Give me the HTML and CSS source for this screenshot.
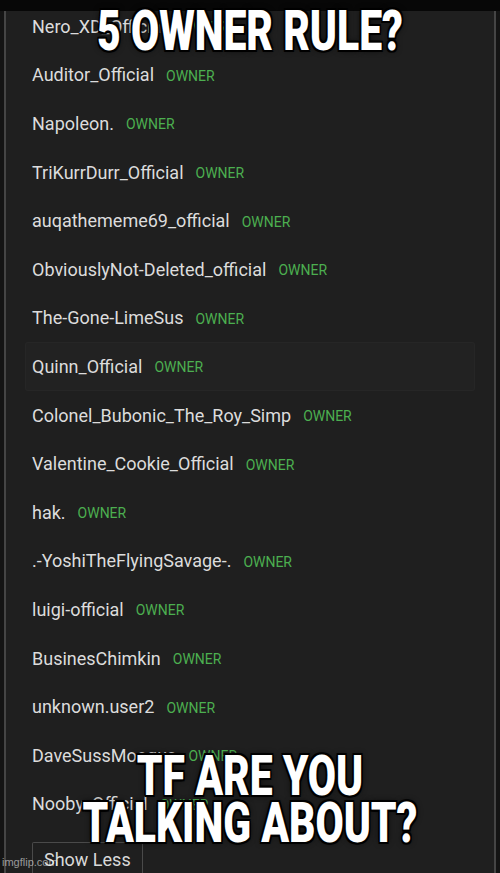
FILE: index.html
```html
<!DOCTYPE html>
<html lang="en">
<head>
    <meta charset="UTF-8">
    <meta name="viewport" content="width=device-width, initial-scale=1.0">
    <title>5 Owner Rule?</title>
    <link rel="stylesheet" href="styles.css">
</head>
<body>
    <div class="top-bar"></div>

    <div class="panel">
        <ul class="members">
            <li class="member"><span class="name">Nero_XD_Official</span><span class="tag">OWNER</span></li>
            <li class="member"><span class="name">Auditor_Official</span><span class="tag">OWNER</span></li>
            <li class="member"><span class="name">Napoleon.</span><span class="tag">OWNER</span></li>
            <li class="member"><span class="name">TriKurrDurr_Official</span><span class="tag">OWNER</span></li>
            <li class="member"><span class="name">auqathememe69_official</span><span class="tag">OWNER</span></li>
            <li class="member"><span class="name">ObviouslyNot-Deleted_official</span><span class="tag">OWNER</span></li>
            <li class="member"><span class="name">The-Gone-LimeSus</span><span class="tag">OWNER</span></li>
            <li class="member active"><span class="name">Quinn_Official</span><span class="tag">OWNER</span></li>
            <li class="member"><span class="name">Colonel_Bubonic_The_Roy_Simp</span><span class="tag">OWNER</span></li>
            <li class="member"><span class="name">Valentine_Cookie_Official</span><span class="tag">OWNER</span></li>
            <li class="member"><span class="name">hak.</span><span class="tag">OWNER</span></li>
            <li class="member"><span class="name">.-YoshiTheFlyingSavage-.</span><span class="tag">OWNER</span></li>
            <li class="member"><span class="name">luigi-official</span><span class="tag">OWNER</span></li>
            <li class="member"><span class="name">BusinesChimkin</span><span class="tag">OWNER</span></li>
            <li class="member"><span class="name">unknown.user2</span><span class="tag">OWNER</span></li>
            <li class="member"><span class="name">DaveSussMoogus</span><span class="tag">OWNER</span></li>
            <li class="member"><span class="name">Nooby_Official</span><span class="tag">OWNER</span></li>
        </ul>
        <button class="show-less">Show Less</button>
    </div>

    <div class="caption caption-top">5 OWNER RULE?</div>
    <div class="caption caption-bottom">TF ARE YOU<br>TALKING ABOUT?</div>

    <div class="watermark">imgflip.com</div>
</body>
</html>
```

FILE: styles.css
```css
body {
    margin: 0;
    width: 500px;
    height: 873px;
    overflow: hidden;
    position: relative;
    background-color: #141414;
    font-family: 'Roboto', 'Liberation Sans', sans-serif;
}

.top-bar {
    position: absolute;
    top: 0;
    left: 0;
    right: 0;
    height: 11px;
    background-color: #070707;
    z-index: 2;
}

.panel {
    margin: 0 4px;
    height: 873px;
    box-sizing: border-box;
    padding-top: 2px;
    background-color: #1f1f1f;
    border-left: 2px solid #454545;
    border-right: 2px solid #454545;
}

.members {
    list-style: none;
    margin: 0;
    padding: 0;
}

.member {
    height: 48.6px;
    display: flex;
    align-items: center;
    gap: 12px;
    padding-left: 26px;
    box-sizing: border-box;
}

.member.active {
    margin: 0 19px;
    padding-left: 7px;
    background-color: #222222;
    border-radius: 3px;
    box-shadow: inset 0 0 0 1px #262626;
}

.name {
    font-size: 18px;
    color: #dcdcdc;
}

.tag {
    font-size: 14px;
    color: #4caf50;
    padding-top: 2px;
}

.show-less {
    margin: 14px 0 0 26px;
    padding: 6px 11px 4px;
    font-family: inherit;
    font-size: 18px;
    color: #d9d9d9;
    background-color: transparent;
    border: 1px solid #4a4a4a;
    border-bottom: none;
    border-radius: 2px 2px 0 0;
}

/* надписи мема */
.caption {
    position: absolute;
    left: 0;
    right: 0;
    text-align: center;
    color: #ffffff;
    font-family: Impact, 'Roboto', sans-serif;
    font-weight: 900;
    font-size: 56px;
    line-height: 47px;
    transform: scaleX(0.73);
    text-shadow:
        2px 2px 0 #000, -2px -2px 0 #000, 2px -2px 0 #000, -2px 2px 0 #000,
        0 2px 0 #000, 0 -2px 0 #000, 2px 0 0 #000, -2px 0 0 #000,
        0 0 7px rgba(0, 0, 0, 0.9);
    z-index: 3;
}

.caption-top {
    top: 8px;
}

.caption-bottom {
    top: 753px;
}

.watermark {
    position: absolute;
    left: 2px;
    bottom: 5px;
    font-family: 'Liberation Sans', sans-serif;
    font-size: 11px;
    color: rgba(255, 255, 255, 0.55);
    z-index: 4;
}
```
